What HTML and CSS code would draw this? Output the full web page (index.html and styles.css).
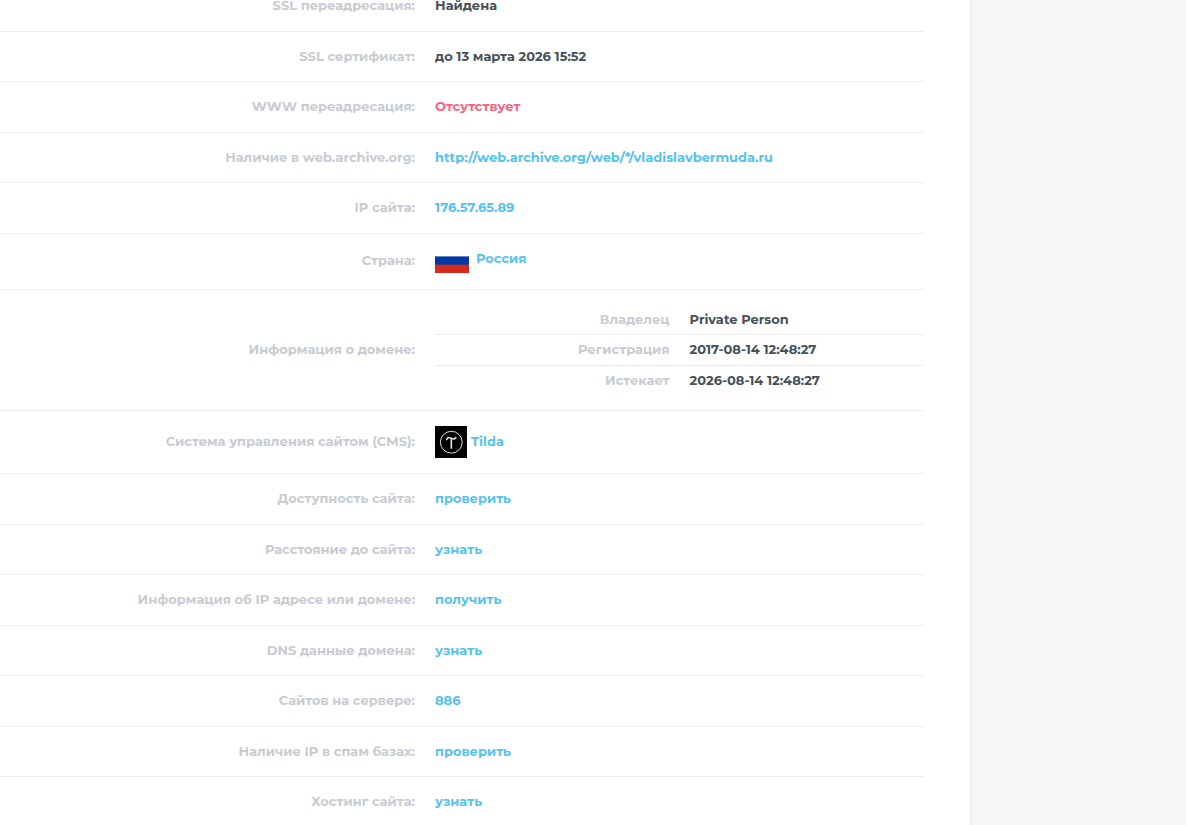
FILE: index.html
```html
<!DOCTYPE html>
<html lang="ru">
<head>
    <meta charset="UTF-8">
    <meta name="viewport" content="width=device-width, initial-scale=1.0">
    <title>Анализ сайта vladislavbermuda.ru</title>
    <link rel="stylesheet" href="styles.css">
</head>
<body>
    <div class="layout">
        <main class="content">
            <table class="info">
                <tr>
                    <th scope="row">SSL переадресация:</th>
                    <td>Найдена</td>
                </tr>
                <tr>
                    <th scope="row">SSL сертификат:</th>
                    <td>до 13 марта 2026 15:52</td>
                </tr>
                <tr>
                    <th scope="row">WWW переадресация:</th>
                    <td class="danger">Отсутствует</td>
                </tr>
                <tr>
                    <th scope="row">Наличие в web.archive.org:</th>
                    <td><a href="#archive">http://web.archive.org/web/*/vladislavbermuda.ru</a></td>
                </tr>
                <tr>
                    <th scope="row">IP сайта:</th>
                    <td><a href="#ip">176.57.65.89</a></td>
                </tr>
                <tr>
                    <th scope="row">Страна:</th>
                    <td>
                        <div class="country">
                            <svg class="flag" viewBox="0 0 34 25" aria-hidden="true">
                                <rect width="34" height="25" fill="#fff"/>
                                <rect y="7" width="34" height="1" fill="#6687c6"/>
                                <rect y="8" width="34" height="8" fill="#0039a6"/>
                                <rect y="15" width="34" height="1" fill="#48347a"/>
                                <rect y="16" width="34" height="8" fill="#d52b1e"/>
                            </svg>
                            <a href="#country">Россия</a>
                        </div>
                    </td>
                </tr>
                <tr>
                    <th scope="row">Информация о домене:</th>
                    <td>
                        <table class="domain">
                            <tr>
                                <th scope="row">Владелец</th>
                                <td>Private Person</td>
                            </tr>
                            <tr>
                                <th scope="row">Регистрация</th>
                                <td>2017-08-14 12:48:27</td>
                            </tr>
                            <tr>
                                <th scope="row">Истекает</th>
                                <td>2026-08-14 12:48:27</td>
                            </tr>
                        </table>
                    </td>
                </tr>
                <tr>
                    <th scope="row">Система управления сайтом (CMS):</th>
                    <td>
                        <div class="cms">
                            <svg class="cms-logo" viewBox="0 0 32 32" aria-hidden="true">
                                <rect width="32" height="32" fill="#000"/>
                                <g fill="none" stroke="#ddd">
                                    <circle cx="16.3" cy="16.2" r="10.9"/>
                                    <path d="M11.6 14.3c.2-2.200 1.300-3 2.900-2.500l3.300 1c1.500.4 2.700-.2 3.300-1.700" stroke-width="1.600"/>
                                    <path d="M16.300 13v9.700" stroke-width="1.700"/>
                                </g>
                            </svg>
                            <a href="#cms">Tilda</a>
                        </div>
                    </td>
                </tr>
                <tr>
                    <th scope="row">Доступность сайта:</th>
                    <td><a href="#availability">проверить</a></td>
                </tr>
                <tr>
                    <th scope="row">Расстояние до сайта:</th>
                    <td><a href="#distance">узнать</a></td>
                </tr>
                <tr>
                    <th scope="row">Информация об IP адресе или домене:</th>
                    <td><a href="#whois">получить</a></td>
                </tr>
                <tr>
                    <th scope="row">DNS данные домена:</th>
                    <td><a href="#dns">узнать</a></td>
                </tr>
                <tr>
                    <th scope="row">Сайтов на сервере:</th>
                    <td><a href="#neighbours">886</a></td>
                </tr>
                <tr>
                    <th scope="row">Наличие IP в спам базах:</th>
                    <td><a href="#spam">проверить</a></td>
                </tr>
                <tr>
                    <th scope="row">Хостинг сайта:</th>
                    <td><a href="#hosting">узнать</a></td>
                </tr>
            </table>
        </main>
        <aside class="side"></aside>
    </div>
</body>
</html>
```
FILE: styles.css
```css
body {
    margin: 0;
    height: 100vh;
    overflow: hidden;
    background: #f5f7f9;
    color: #475059;
    font-family: Montserrat, Inter, sans-serif;
    font-size: 13px;
    font-weight: 700;
    line-height: 1.5;
}
.layout {
    display: grid;
    grid-template-columns: 1fr 215px;
    min-height: 100vh;
}
.content {
    padding-right: 46px;
    background: #fff;
    border-right: 1px solid #e9ecf0;
}
table {
    width: 100%;
    border-spacing: 0;
    table-layout: fixed;
}
/* the list is scrolled up under the top edge */
.info {
    margin-top: -20px;
}
th,
td {
    padding: 15px 0 15px 10px;
    border-top: 1px solid #ebedef;
    text-align: left;
}
th {
    width: 46%;
    box-sizing: border-box;
    padding: 15px 10px 15px 0;
    color: #c8ccd2;
    font-weight: 700;
    text-align: right;
}
.domain th,
.domain td {
    padding-top: 5px;
    padding-bottom: 5px;
}
.domain th {
    width: 50%;
}
.domain tr:first-child th,
.domain tr:first-child td {
    border-top: 0;
}
a {
    color: #55c3ec;
    text-decoration: none;
}
.danger {
    color: #fc6180;
}
.country {
    display: flex;
    gap: 7px;
}
.flag {
    width: 34px;
    height: 25px;
}
.cms {
    display: flex;
    align-items: center;
    gap: 4px;
}
.cms-logo {
    width: 32px;
    height: 32px;
}
```
